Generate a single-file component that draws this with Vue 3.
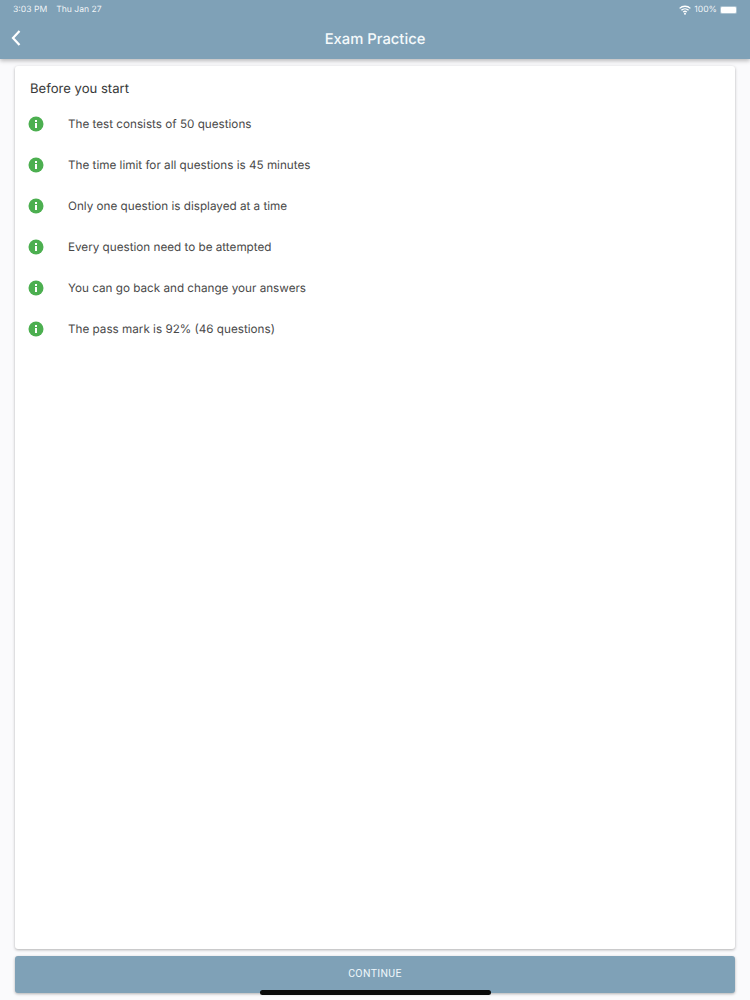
<template>
  <div class="screen">
    <header class="app-bar">
      <div class="status-bar">
        <div class="status-left">
          <span>3:03 PM</span>
          <span>Thu Jan 27</span>
        </div>
        <div class="status-right">
          <svg class="wifi" width="12" height="10" viewBox="0 0 12 10">
            <path d="M0.6 3.4A7.8 7.8 0 0 1 11.4 3.4" />
            <path d="M2.4 5.3A5.2 5.2 0 0 1 9.6 5.3" />
            <path d="M4.2 7.1A2.6 2.6 0 0 1 7.8 7.1" />
            <circle cx="6" cy="8.8" r="1" />
          </svg>
          <span>100%</span>
          <span class="battery"><span class="battery-level"></span></span>
        </div>
      </div>
      <div class="toolbar">
        <button class="btn-back" aria-label="Back">
          <svg width="12" height="18" viewBox="0 0 12 18">
            <path d="M9.5 2L3 9l6.500 7" />
          </svg>
        </button>
        <h1>Exam Practice</h1>
      </div>
    </header>

    <main class="content">
      <section class="card">
        <h2>Before you start</h2>
        <ul class="rules">
          <li v-for="rule in rules" :key="rule">
            <svg class="info-icon" width="16" height="16" viewBox="0 0 16 16">
              <circle cx="8" cy="8" r="7.500" fill="#4caf50" />
              <rect x="7" y="7" width="2" height="5" fill="#fff" />
              <rect x="7" y="4" width="2" height="2" fill="#fff" />
            </svg>
            <span>{{ rule }}</span>
          </li>
        </ul>
      </section>
      <button class="btn-continue">CONTINUE</button>
    </main>
    <div class="home-indicator"></div>
  </div>
</template>

<script setup>
const rules = [
  "The test consists of 50 questions",
  "The time limit for all questions is 45 minutes",
  "Only one question is displayed at a time",
  "Every question need to be attempted",
  "You can go back and change your answers",
  "The pass mark is 92% (46 questions)",
];
</script>

<style>
html,
body {
  margin: 0;
  background: #fafafc;
}
</style>

<style scoped>
.screen {
  position: relative;
  display: flex;
  flex-direction: column;
  width: 750px;
  height: 1000px;
  overflow: hidden;
  background: #fafafc;
  font-family: Inter, Roboto, "Liberation Sans", sans-serif;
  text-rendering: geometricPrecision;
}

.app-bar {
  flex: none;
  height: 59px;
  background: #7fa1b7;
  color: #fff;
  box-shadow: 0 2px 4px rgba(0, 0, 0, 0.25);
  z-index: 1;
}

.status-bar {
  display: flex;
  justify-content: space-between;
  align-items: center;
  height: 18px;
  padding: 1px 13px 0;
  box-sizing: border-box;
  font-size: 8.600px;
  color: rgba(255, 255, 255, 0.9);
}

.status-left {
  display: flex;
  gap: 9px;
}

.status-right {
  display: flex;
  align-items: center;
  gap: 3px;
}

.wifi path {
  fill: none;
  stroke: #fff;
  stroke-width: 1.300;
}

.wifi circle {
  fill: #fff;
}

.battery {
  display: flex;
  width: 17px;
  height: 8px;
  padding: 1px;
  border-radius: 2px;
  background: rgba(255, 255, 255, 0.35);
  box-sizing: border-box;
}

.battery-level {
  flex: 1;
  background: #fff;
  border-radius: 1px;
}

.toolbar {
  position: relative;
  display: flex;
  align-items: center;
  justify-content: center;
  height: 41px;
}

.toolbar h1 {
  margin: 0;
  padding-top: 1px;
  font-size: 14.800px;
  font-weight: 500;
  color: #f4f9fb;
}

.btn-back {
  position: absolute;
  left: 10px;
  top: 11px;
  display: flex;
  padding: 0;
  background: none;
  border: none;
}

.btn-back path {
  fill: none;
  stroke: #fff;
  stroke-width: 2.200;
}

.content {
  flex: 1;
  display: flex;
  flex-direction: column;
  gap: 7px;
  padding: 7px 15px 7px;
  min-height: 0;
}

.card {
  flex: 1;
  padding: 15px 15px 14px;
  background: #fff;
  border-radius: 3px;
  box-shadow: 0 1px 3px rgba(0, 0, 0, 0.3);
}

.card h2 {
  margin: 0;
  font-size: 13.100px;
  line-height: 16px;
  font-weight: 400;
  color: #383838;
}

.rules {
  margin: 6px 0 0;
  padding: 0;
  list-style: none;
}

.rules li {
  display: flex;
  align-items: center;
  height: 41px;
  margin-left: -2px;
  font-size: 11.700px;
  color: #484848;
}

.info-icon {
  flex: none;
  margin-right: 24px;
}

.btn-continue {
  flex: none;
  height: 37px;
  padding: 0 0 2px;
  border: none;
  border-radius: 3px;
  background: #7fa1b7;
  color: #eef7fb;
  font-family: Roboto, "Liberation Sans", sans-serif;
  font-size: 10.500px;
  letter-spacing: 0.36px;
  box-shadow: 0 1px 3px rgba(0, 0, 0, 0.3);
}

.home-indicator {
  position: absolute;
  left: 260px;
  bottom: 5px;
  width: 231px;
  height: 5px;
  border-radius: 3px;
  background: #0a0a0a;
}
</style>
